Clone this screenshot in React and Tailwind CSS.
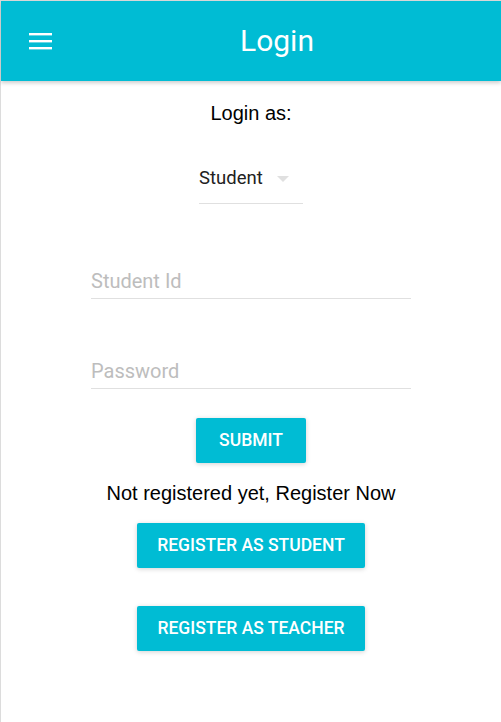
import React from "react";

export default function App() {
  return (
    <div className="min-h-[722px] w-[501px] bg-white border-l border-t border-[#dcdcdc] font-['Roboto',sans-serif]">
      <header className="h-[80px] bg-[#00bcd4] flex items-center shadow-[0_2px_4px_rgba(0,0,0,0.2)] relative">
        <div className="w-[52px] h-full flex items-center justify-end">
          <svg width="24" height="18" viewBox="0 0 24 18">
            <rect x="0" y="1" width="23" height="2.4" fill="#fff" />
            <rect x="0" y="8" width="23" height="2.4" fill="#fff" />
            <rect x="0" y="15" width="23" height="2.4" fill="#fff" />
          </svg>
        </div>
        <h1 className="flex-1 text-center text-white text-[30px] font-normal leading-none">Login</h1>
      </header>
      <main className="flex flex-col items-center">
        <p className="mt-[20px] text-[20px] leading-[24px] text-black font-['Liberation_Sans',Arial,sans-serif]">Login as:</p>
        <div className="mt-[40px] w-[104px] h-[39px] border-b border-[#e0e0e0] flex items-start justify-between pt-[2px]">
          <span className="text-[18.5px] leading-[22px] text-[#212121]">Student</span>
          <svg width="12" height="6" viewBox="0 0 12 6" className="mt-[9px] mr-[14px]">
            <path d="M0 0 L12 0 L6 6 Z" fill="#e0e0e0" />
          </svg>
        </div>
        <div className="mt-[65px] w-[320px] h-[30px] border-b border-[#e0e0e0] flex items-start">
          <span className="text-[20px] leading-[24px] text-[#bdbdbd]">Student Id</span>
        </div>
        <div className="mt-[60px] w-[320px] h-[30px] border-b border-[#e0e0e0] flex items-start">
          <span className="text-[20px] leading-[24px] text-[#bdbdbd]">Password</span>
        </div>
        <button className="mt-[29px] w-[110px] h-[45px] bg-[#00bcd4] text-white text-[17.5px] font-medium rounded-[2px] shadow-[0_1px_5px_rgba(0,0,0,0.18)]">SUBMIT</button>
        <p className="mt-[18px] text-[20px] leading-[24px] text-black font-['Liberation_Sans',Arial,sans-serif]">Not registered yet, Register Now</p>
        <button className="mt-[18px] w-[228px] h-[45px] bg-[#00bcd4] text-white text-[17.5px] font-medium rounded-[2px] shadow-[0_1px_5px_rgba(0,0,0,0.18)]">REGISTER AS STUDENT</button>
        <button className="mt-[38px] w-[228px] h-[45px] bg-[#00bcd4] text-white text-[17.5px] font-medium rounded-[2px] shadow-[0_1px_5px_rgba(0,0,0,0.18)]">REGISTER AS TEACHER</button>
      </main>
    </div>
  );
}
